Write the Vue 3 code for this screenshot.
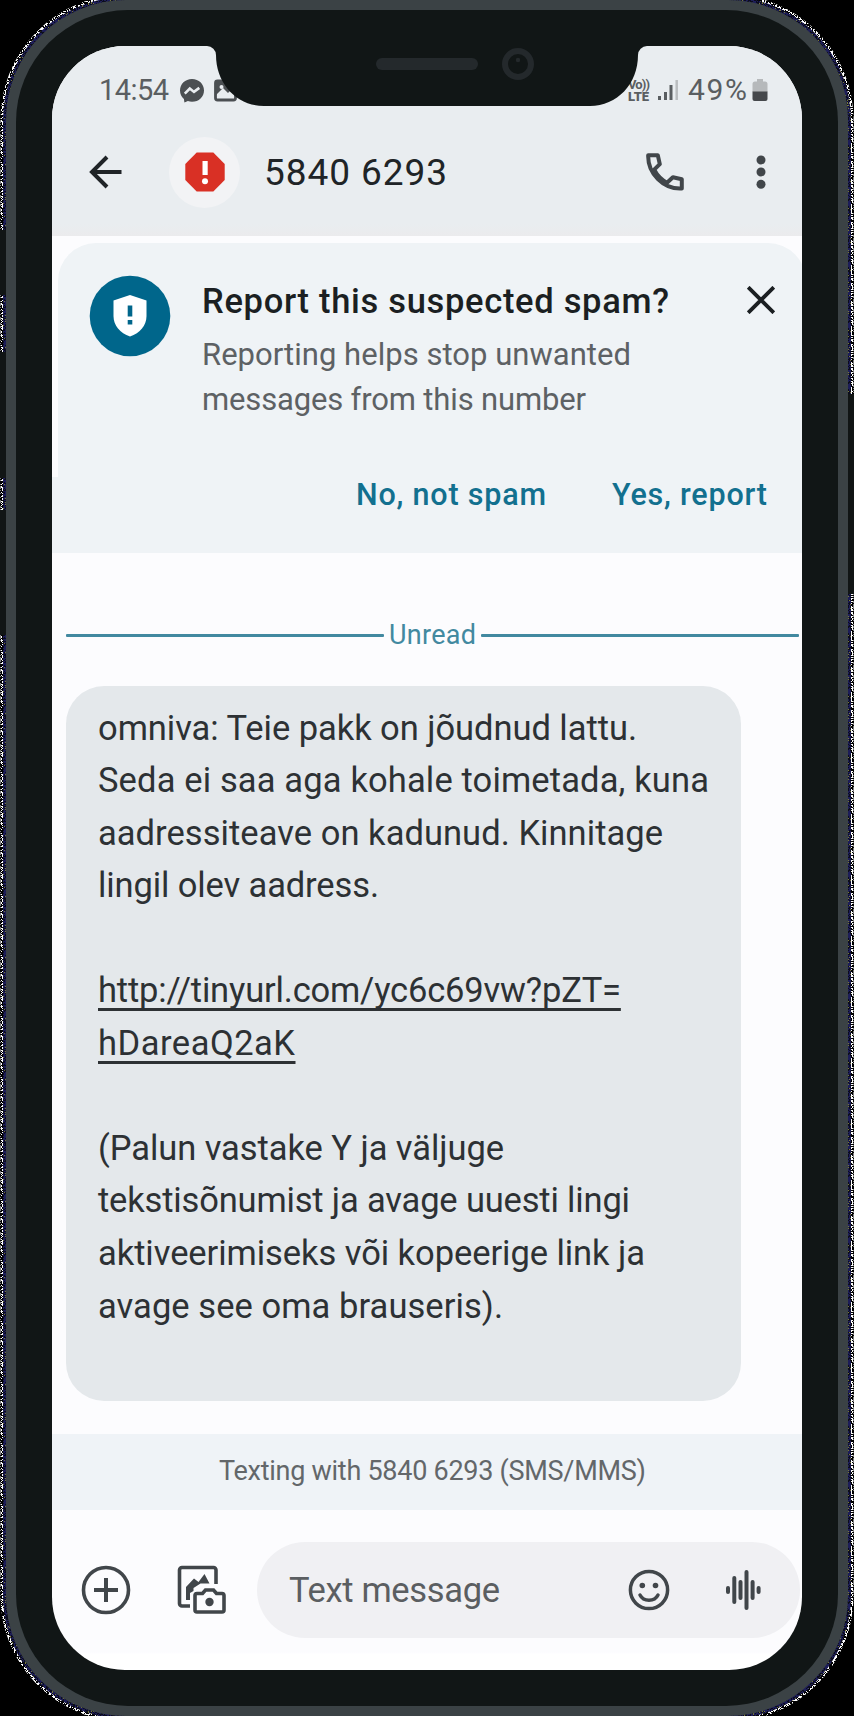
<script setup>
// Spreads a line's letters so that it spans the given width in pixels.
const vFit = {
  mounted(el, { value }) {
    const n = el.textContent.length
    const natural = el.getBoundingClientRect().width
    const gap = (value - natural) / (n - 1)
    el.style.letterSpacing = gap.toFixed(3) + 'px'
    el.style.marginRight = (-gap).toFixed(3) + 'px'
  }
}

const message = [
  { text: 'omniva: Teie pakk on jõudnud lattu.', w: 539 },
  { text: 'Seda ei saa aga kohale toimetada, kuna', w: 611 },
  { text: 'aadressiteave on kadunud. Kinnitage', w: 565 },
  { text: 'lingil olev aadress.', w: 281 },
  null,
  { text: 'http://tinyurl.com/yc6c69vw?pZT=', w: 523, link: true },
  { text: 'hDareaQ2aK', w: 197, link: true },
  null,
  { text: '(Palun vastake Y ja väljuge', w: 406 },
  { text: 'tekstisõnumist ja avage uuesti lingi', w: 532 },
  { text: 'aktiveerimiseks või kopeerige link ja', w: 547 },
  { text: 'avage see oma brauseris).', w: 405 }
]

// Pixel speckle for the fringe around the case.
let seed = 7
const rnd = () => (seed = (seed * 16807) % 2147483647) / 2147483647
function speckle(size, density) {
  let d = ''
  for (let y = 0; y < size; y++)
    for (let x = 0; x < size; x++) if (rnd() < density) d += `M${x} ${y}h1v1h-1z`
  return d
}
const white = speckle(61, 0.5)
const navy = speckle(61, 0.55)
const gold = speckle(61, 0.05)
const bars = [[728, 8], [734.3, 28], [740.5, 20], [746.5, 40], [752.6, 20], [758.6, 8]]
</script>

<template>
  <div class="stage">
    <svg class="case" width="854" height="1716" viewBox="0 0 854 1716">
      <defs>
        <pattern id="pw" width="61" height="61" patternUnits="userSpaceOnUse">
          <path :d="white" fill="#fff" shape-rendering="crispEdges" />
        </pattern>
        <pattern id="pn" width="61" height="61" patternUnits="userSpaceOnUse">
          <rect width="61" height="61" fill="#0b0c1c" />
          <path :d="navy" fill="#1d1d58" shape-rendering="crispEdges" />
          <path :d="gold" fill="#77773a" shape-rendering="crispEdges" />
        </pattern>
      </defs>
      <rect width="854" height="1716" fill="#000" />
      <rect x="6" y="0" width="842" height="1716" rx="120" fill="none" stroke="url(#pw)" stroke-width="11" />
      <rect x="6" y="0" width="842" height="1716" rx="120" fill="none" stroke="url(#pn)" stroke-width="6" />
      <g fill="#111515">
        <rect x="0" y="230" width="6" height="65" />
        <rect x="0" y="352" width="6" height="126" />
        <rect x="0" y="510" width="6" height="125" />
        <rect x="848" y="394" width="6" height="200" />
      </g>
      <rect x="6" y="0" width="842" height="1716" rx="120" fill="#3b4245" />
      <rect x="16" y="10" width="822" height="1696" rx="112" fill="#111616" />
    </svg>

    <main class="screen">
      <header class="top">
        <div class="status">
          <span class="clock"><span v-fit="70">14:54</span></span>
          <svg class="notif" width="60" height="30" viewBox="178 75 60 30">
            <path d="M192 78c-6.900 0-12 5-12 11.600 0 3.400 1.500 6.300 3.900 8.300l.5 3.700 3.500-1.500c1.300.4 2.700.6 4.100.6 6.900 0 12-5 12-11.300S198.900 78 192 78z" fill="#4b4f52" />
            <path d="M184.800 92.600l5-5 4.200 3.300 5.300-4" fill="none" stroke="#e9edf0" stroke-width="2.600" />
            <rect x="215.500" y="80" width="20" height="19" rx="2" fill="none" stroke="#4b4f52" stroke-width="2.800" />
            <path d="M216 94l7-7 5 5 4-4v-7h-16z" fill="#4b4f52" />
            <circle cx="221.500" cy="86" r="2" fill="#e9edf0" />
          </svg>
          <span class="grow"></span>
          <span class="volte"><span v-fit="22">Vo))</span><b v-fit="21">LTE</b></span>
          <svg class="signal" width="21" height="24" viewBox="0 0 21 24">
            <path d="M1.500 18v4M7.500 14v8M13 7v15" stroke="#5a5e61" stroke-width="3" />
            <path d="M18.700 2v20" stroke="#babdbf" stroke-width="2.500" />
          </svg>
          <span class="pct"><span v-fit="59">49%</span></span>
          <svg class="batt" width="16" height="24" viewBox="0 0 16 24">
            <path d="M5 1h6v2.500h2a2.500 2.500 0 0 1 2.500 2.500v8H.5V6A2.500 2.500 0 0 1 3 3.500h2z" fill="#b6b9bb" />
            <path d="M.5 13.500h15v7.500a2 2 0 0 1-2 2h-11a2 2 0 0 1-2-2z" fill="#45484b" />
          </svg>
        </div>
        <div class="bar">
          <svg width="34" height="34" viewBox="0 0 34 34" fill="none" stroke="#202427" stroke-width="4">
            <path d="M32.500 17H3M18 2L3 17l15 15" />
          </svg>
          <div class="avatar">
            <svg width="40" height="40" viewBox="0 0 40 40">
              <path d="M11.700.5h16.600L39.700 12v16L28.300 39.500H11.700L.3 28V12z" fill="#d93025" />
              <path d="M17.500 9h5.200v14h-5.200z" fill="#fff" /><circle cx="20" cy="29.200" r="3" fill="#fff" />
            </svg>
          </div>
          <h1><span v-fit="183">5840 6293</span></h1>
          <span class="grow"></span>
          <svg class="call" width="38" height="38" viewBox="0 0 38 38" fill="none" stroke="#41464a" stroke-width="4" stroke-linejoin="round">
            <path d="M2.200 2.200h9.600l2 8.900-5.600 5.600C11.500 23 15.200 26.600 21 29.800l5.900-5.600 8.900 2v9.300C17.500 36.500 1.500 20.500 2.200 2.200z" />
          </svg>
          <svg class="more" width="10" height="36" viewBox="0 0 10 36" fill="#41464a">
            <circle cx="5" cy="6" r="4.500" /><circle cx="5" cy="18" r="4.500" /><circle cx="5" cy="30.300" r="4.500" />
          </svg>
        </div>
      </header>

      <section class="spam">
        <svg class="shield" width="82" height="82" viewBox="0 0 82 82">
          <circle cx="41" cy="41" r="40.300" fill="#00668b" />
          <path d="M41 20l16.500 5.500v15.500c0 9.500-6.500 17-16.500 20.500-10-3.500-16.500-11-16.500-20.500V25.500z" fill="#fff" />
          <path d="M38.700 30.500h4.600v11h-4.600zM38.700 45h4.600v4.500h-4.600z" fill="#00668b" />
        </svg>
        <div class="spam-copy">
          <h2><span v-fit="467">Report this suspected spam?</span></h2>
          <p><span v-fit="429">Reporting helps stop unwanted</span></p>
          <p><span v-fit="384">messages from this number</span></p>
        </div>
        <svg class="close" width="28" height="28" viewBox="0 0 28 28" stroke="#1b1f22" stroke-width="3.800">
          <path d="M1.200 1.200l25.600 25.600M26.800 1.200L1.200 26.800" />
        </svg>
        <div class="actions">
          <span v-fit="190">No, not spam</span>
          <span v-fit="155">Yes, report</span>
        </div>
      </section>

      <div class="unread"><i></i><span v-fit="87">Unread</span><i></i></div>

      <article class="bubble">
        <div v-for="(line, i) in message" :key="i" class="line">
          <span v-if="line" v-fit="line.w" :class="{ link: line.link }">{{ line.text }}</span>
        </div>
      </article>

      <div class="texting"><span v-fit="427">Texting with 5840 6293 (SMS/MMS)</span></div>

      <footer class="compose">
        <svg width="50" height="50" viewBox="81 1565 50 50" fill="none" stroke="#41464a" stroke-width="3.600">
          <circle cx="106" cy="1590" r="22.500" /><path d="M94 1590h24M106 1578v24" stroke-width="4" />
        </svg>
        <svg class="gallery" width="50" height="50" viewBox="177 1565 50 50" fill="none" stroke="#41464a" stroke-width="3.600">
          <path d="M190 1606h-8a2.500 2.500 0 0 1-2.500-2.500v-33.500a2.500 2.500 0 0 1 2.500-2.500h31.500a2.500 2.500 0 0 1 2.500 2.500v14" />
          <path d="M186 1600v-13l8-8.500 4.500 3.500 6-8 5 9.500h-9l-7 4.500v3l-3.500 2v7z" fill="#41464a" stroke="none" />
          <path d="M197 1593.500h5.500l3-3.500h8l3 3.500h5.500a2 2 0 0 1 2 2v14.500a2 2 0 0 1-2 2h-25a2 2 0 0 1-2-2v-14.500a2 2 0 0 1 2-2z" />
          <circle cx="209.500" cy="1602" r="4.200" fill="#41464a" stroke="none" />
        </svg>
        <div class="field">
          <span v-fit="211">Text message</span>
          <span class="grow"></span>
          <svg width="42" height="42" viewBox="628 1569 42 42" fill="none" stroke="#41464a" stroke-width="3.500">
            <circle cx="649" cy="1590" r="18.600" /><path d="M640 1595c3.500 7 14.500 7 18 0" stroke-linecap="round" />
            <g fill="#41464a" stroke="none"><circle cx="642.300" cy="1585.500" r="2.800" /><circle cx="655.500" cy="1585.500" r="2.800" /></g>
          </svg>
          <svg class="wave" width="40" height="42" viewBox="724 1569 40 42">
            <rect v-for="b in bars" :key="b[0]" :x="b[0] - 2" :y="1590 - b[1] / 2" width="4" :height="b[1]" rx="2" fill="#41464a" />
          </svg>
        </div>
      </footer>
    </main>

    <svg class="notch" width="440" height="60" viewBox="207 46 440 60">
      <path d="M207 46a9 9 0 0 1 9 9C216 84 237 106 264 106H590C617 106 638 84 638 55a9 9 0 0 1 9-9z" fill="#111616" />
      <rect x="376" y="58" width="102" height="12" rx="6" transform="translate(0 0)" fill="#24292c" />
      <circle cx="518" cy="64" r="13" fill="none" stroke="#24292c" stroke-width="6" />
      <circle cx="518" cy="60" r="2.200" fill="#24292c" />
    </svg>
  </div>
</template>

<style>
html, body { margin: 0; background: #000; }
</style>

<style scoped>
.stage { position: relative; width: 854px; height: 1716px; overflow: hidden; font-family: Roboto, "Liberation Sans", sans-serif; }
.stage * { box-sizing: border-box; }
svg { display: block; flex: none; }
span, b { white-space: nowrap; }
h1, h2, p { margin: 0; font-weight: 400; }
.case { position: absolute; left: 0; top: 0; }
.notch { position: absolute; left: 207px; top: 46px; }
.screen {
  position: absolute; left: 52px; top: 46px; width: 750px; height: 1624px;
  border-radius: 73px; overflow: hidden; display: flex; flex-direction: column;
  background: linear-gradient(#fcfcfe 1606px, #fff 1608px);
}
.grow { flex: 1; }
.top { height: 190px; background: linear-gradient(#e9edf0 178px, #ebebed); flex: none; }
.status { height: 88px; padding: 0 34px 0 47px; display: flex; align-items: center; color: #5a5e61; font-size: 29px; line-height: 36px; }
.clock { width: 79px; }
.clock, .pct { margin-top: -1px; }
.notif { margin-top: 2px; }
.volte { display: flex; flex-direction: column; font-size: 13px; font-weight: 700; line-height: 12px; width: 30px; }
.volte > * { align-self: flex-start; }
.volte { margin-top: 1px; }
.signal { margin-right: 9px; }
.pct { width: 64px; font-size: 30px; }
.batt { margin-top: -1px; }
.bar { display: flex; align-items: center; height: 76px; padding: 0 36px 0 37px; }
.avatar { width: 71px; height: 71px; border-radius: 50%; background: #f2f3f5; display: flex; align-items: center; justify-content: center; margin: 0 24px 0 46px; }
h1 { font-size: 37px; line-height: 44px; color: #202427; padding-top: 2px; }
.call { margin-right: 72px; }
.spam {
  margin: 7px -4px 0 6px; height: 310px; flex: none; background: #eff3f6; border-radius: 38px 38px 0 0;
  position: relative;
  display: grid; grid-template-columns: 82px 1fr 28px; grid-template-rows: 200px 1fr; padding: 32px 31px 0 30px; column-gap: 32px;
}
.spam::before { content: ""; position: absolute; left: -6px; bottom: 0; width: 6px; height: 76px; background: #eff3f6; }
.shield { margin-left: 1px; }
.close { margin-top: 11px; }
h2 { font-size: 34.500px; font-weight: 500; line-height: 44px; color: #1b1f22; margin: 4px 0 9px; }
.spam-copy p { font-size: 31px; line-height: 45px; color: #5d6164; }
.actions { grid-column: 1 / 4; display: flex; justify-content: flex-end; gap: 66px; color: #12708f; font-size: 30.500px; font-weight: 500; line-height: 40px; padding-right: 8px; }
.unread { display: flex; align-items: center; gap: 5px; height: 40px; margin: 62px 3px 0 14px; color: #4289a0; font-size: 27px; line-height: 40px; flex: none; }
.unread i { flex: 1; height: 3px; border-radius: 1px; background: #4289a0; }
.bubble { margin: 31px 0 0 14px; width: 675px; height: 715px; flex: none; border-radius: 38px; background: #e4e8eb; padding: 15.500px 0 0 32px; color: #2d3134; font-size: 34.500px; }
.line { height: 52.550px; line-height: 52.550px; }
.link { text-decoration: underline; text-decoration-thickness: 3px; text-underline-offset: 6px; text-decoration-skip-ink: none; }
.texting { margin-top: 33px; height: 76px; flex: none; background: #eff3f7; color: #63676a; font-size: 27px; line-height: 75px; padding-left: 167px; }
.compose { margin-top: 32px; height: 96px; display: flex; align-items: center; padding: 0 2px 0 29px; }
.gallery { margin: 0 30px 0 46px; }
.field { flex: 1; height: 96px; border-radius: 48px; background: #f0f0f3; display: flex; align-items: center; padding: 0 36px 0 32px; font-size: 34.500px; color: #5b5e61; }
.wave { margin-left: 54px; }
</style>
